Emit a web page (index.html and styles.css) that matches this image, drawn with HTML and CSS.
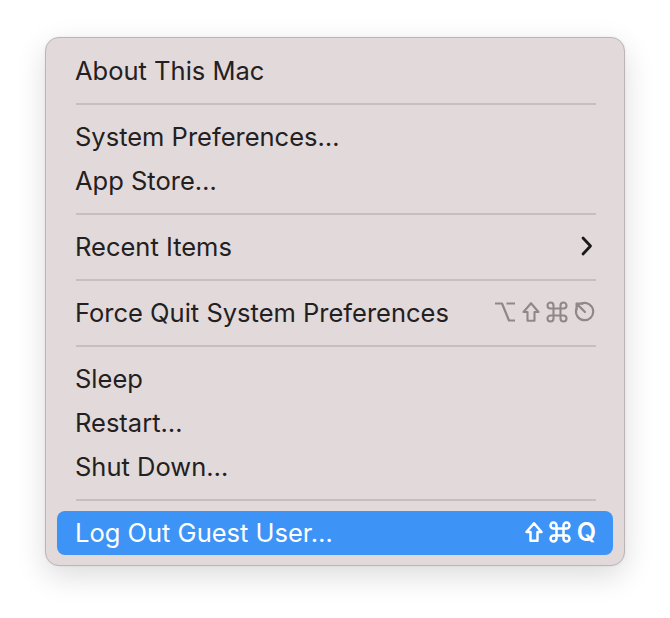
FILE: index.html
```html
<!DOCTYPE html>
<html lang="en">
<head>
  <meta charset="UTF-8" />
  <title>Apple Menu</title>
  <link rel="stylesheet" href="styles.css">
</head>
<body>

<div class="menu">
  <div class="item">About This Mac</div>
  <div class="separator"></div>

  <div class="item">System Preferences…</div>
  <div class="item">App Store…</div>
  <div class="separator"></div>

  <div class="item">
    <span>Recent Items</span>
    <svg class="chevron" width="12" height="20" viewBox="0 0 12 20">
      <path d="M2 2 L9.5 10 L2 18" fill="none" stroke="#1a1a1a" stroke-width="2.8" stroke-linecap="round" stroke-linejoin="round"/>
    </svg>
  </div>
  <div class="separator"></div>

  <div class="item">
    <span>Force Quit System Preferences</span>
    <span class="keys muted">
      <!-- option -->
      <svg class="key-icon" width="22" height="22" viewBox="0 -1 22 22">
        <path d="M1 1.5 H8 L15 18.5 H21 M12.5 1.5 H21" fill="none" stroke="currentColor" stroke-width="2.2" stroke-linejoin="round"/>
      </svg>
      <!-- shift -->
      <svg class="key-icon" width="18" height="22" viewBox="0 -1 18 22">
        <path d="M9 1.2 L16.5 10 H12.5 V18.8 H5.5 V10 H1.5 Z" fill="none" stroke="currentColor" stroke-width="2.1" stroke-linejoin="round"/>
      </svg>
      <!-- command -->
      <svg class="key-icon" width="22" height="22" viewBox="0 -1 22 22">
        <path d="M7.5 6.5 V3.5 A3 3 0 1 0 4.5 6.5 H17.5 A3 3 0 1 0 14.5 3.5 V16.5 A3 3 0 1 0 17.5 13.5 H4.5 A3 3 0 1 0 7.5 16.5 Z" fill="none" stroke="currentColor" stroke-width="2.1" stroke-linejoin="round"/>
      </svg>
      <!-- escape -->
      <svg class="key-icon" width="22" height="22" viewBox="0 0 22 22">
        <path d="M8 2.4 A8.6 8.6 0 1 1 2.4 8" fill="none" stroke="currentColor" stroke-width="2.2" stroke-linecap="round"/>
        <path d="M2.6 2.6 L11 11 M2.6 2.6 L2.6 8.5 M2.6 2.6 L8.5 2.6" fill="none" stroke="currentColor" stroke-width="2.2" stroke-linecap="round" stroke-linejoin="round"/>
      </svg>
    </span>
  </div>
  <div class="separator"></div>

  <div class="item">Sleep</div>
  <div class="item">Restart…</div>
  <div class="item">Shut Down…</div>
  <div class="separator"></div>

  <div class="item active">
    <span>Log Out Guest User…</span>
    <span class="keys">
      <svg class="key-icon" width="18" height="22" viewBox="0 -1 18 22">
        <path d="M9 1.2 L16.5 10 H12.5 V18.8 H5.5 V10 H1.5 Z" fill="none" stroke="currentColor" stroke-width="2.5" stroke-linejoin="round"/>
      </svg>
      <svg class="key-icon" width="22" height="22" viewBox="0 -1 22 22">
        <path d="M7.5 6.5 V3.5 A3 3 0 1 0 4.5 6.5 H17.5 A3 3 0 1 0 14.5 3.5 V16.5 A3 3 0 1 0 17.5 13.5 H4.5 A3 3 0 1 0 7.5 16.5 Z" fill="none" stroke="currentColor" stroke-width="2.5" stroke-linejoin="round"/>
      </svg>
      <span class="letter">Q</span>
    </span>
  </div>
</div>

</body>
</html>
```

FILE: styles.css
```css
* {
  box-sizing: border-box;
}

html, body {
  min-height: 100%;
}

body {
  margin: 0;
  min-height: 100vh;
  background: #ffffff;
  font-family: Inter, 'Noto Sans', sans-serif;
  overflow: hidden;
}

.menu {
  width: 580px;
  margin: 37px 0 0 45px;
  padding: 11px 11px 10px;
  background-color: #e2d9db;
  border: 1px solid #bcb5b6;
  border-radius: 14px;
  box-shadow: 0 10px 30px rgba(0, 0, 0, 0.14), 0 0 2px rgba(0, 0, 0, 0.08);
}

.item {
  height: 44px;
  display: flex;
  align-items: center;
  justify-content: space-between;
  padding: 0 17px 2px 18px;
  font-size: 25.5px;
  color: #222021;
  border-radius: 8px;
}

.item.active {
  background-color: #3d94f6;
  color: #ffffff;
}

.separator {
  height: 2px;
  margin: 10px 17px 10px 19px;
  background-color: #c7bec0;
}

.chevron {
  margin-right: 3px;
}

.keys {
  display: flex;
  align-items: center;
  gap: 6px;
}

.muted {
  color: #8e8889;
}

.key-icon {
  display: block;
}

.letter {
  font-size: 25px;
  font-weight: 600;
  line-height: 1;
}
```
